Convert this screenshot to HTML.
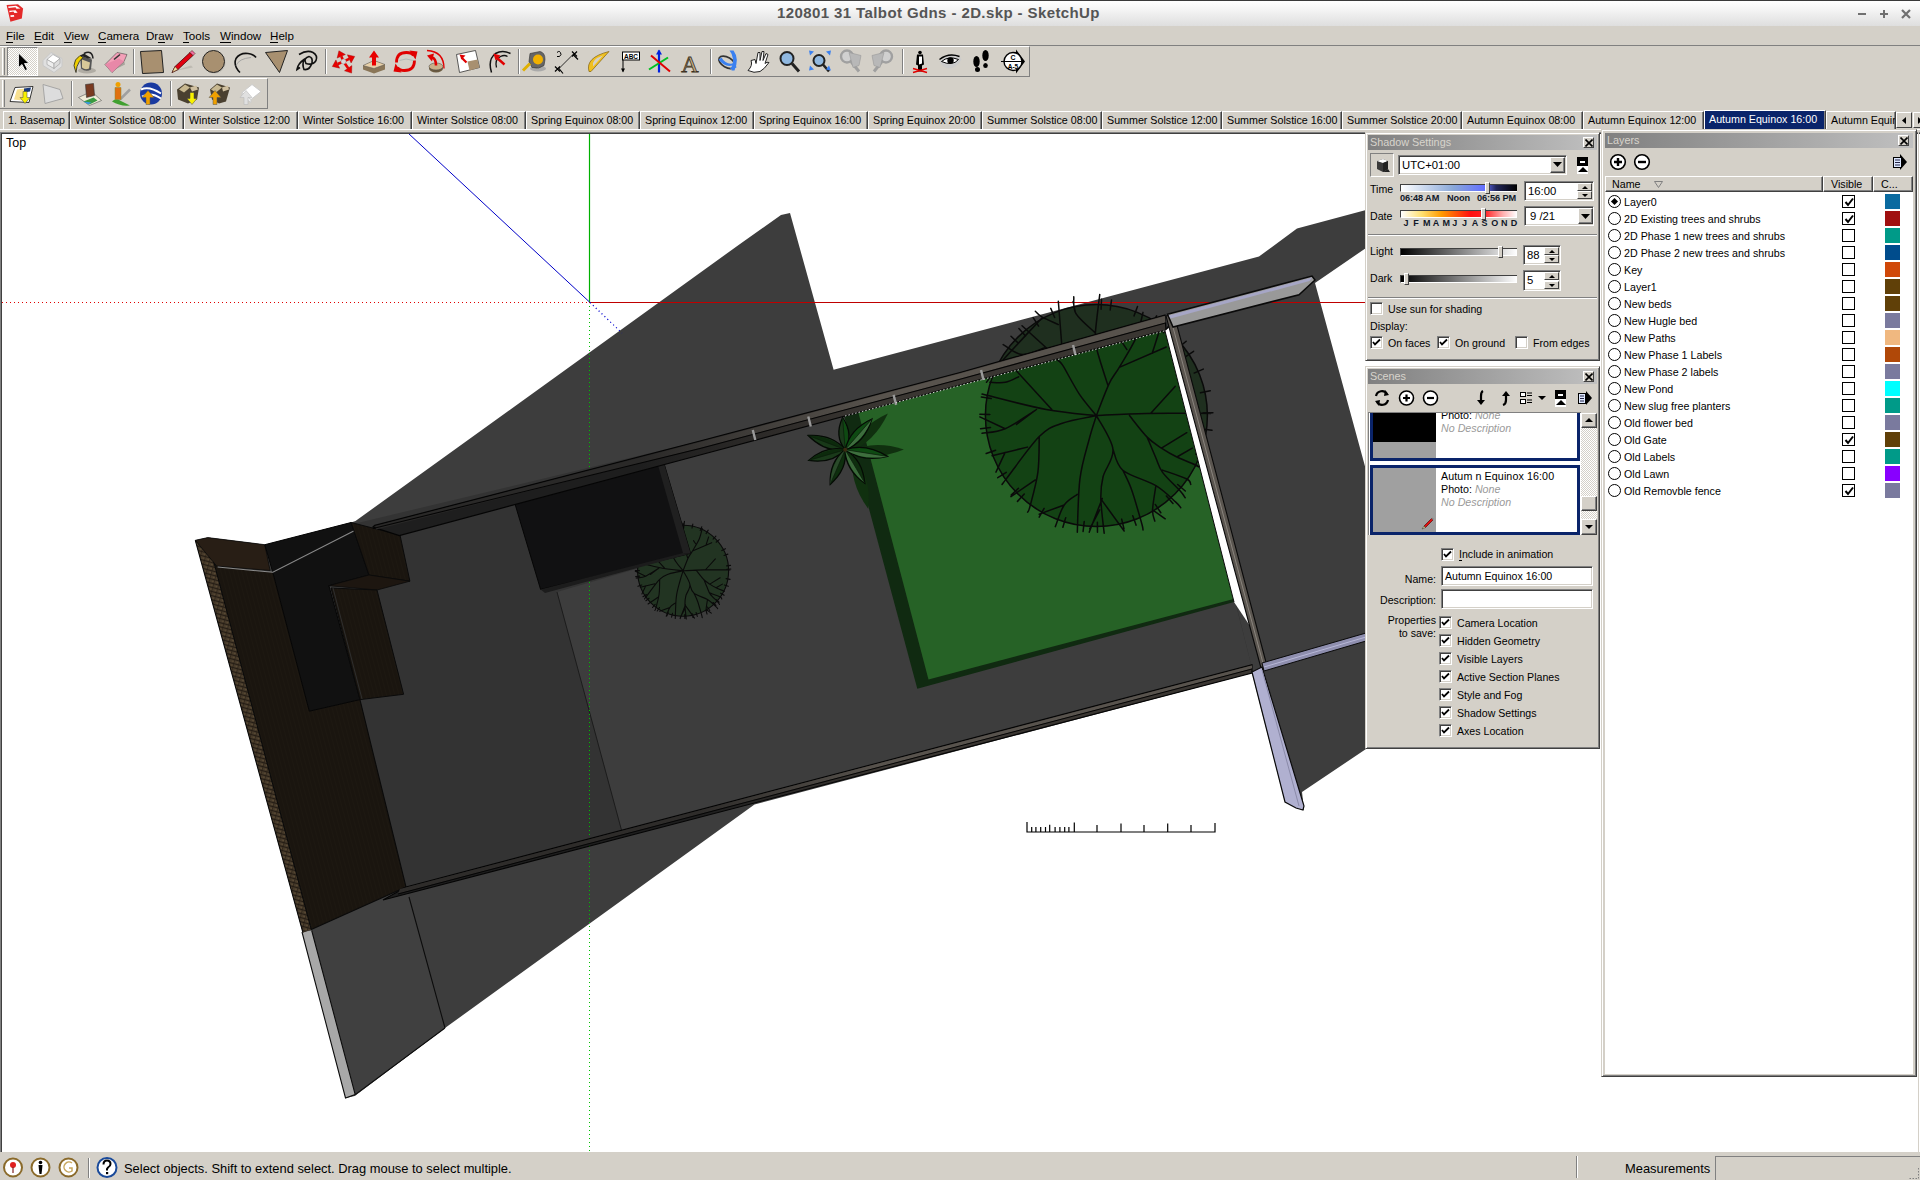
<!DOCTYPE html>
<html><head><meta charset="utf-8">
<style>
*{box-sizing:border-box}
html,body{margin:0;padding:0;width:1920px;height:1180px;overflow:hidden;background:#d4d0c8;font-family:"Liberation Sans",sans-serif;color:#000}
.a{position:absolute}
#title{left:0;top:0;width:1920px;height:26px;background:linear-gradient(#ffffff,#f6f6f6 30%,#dedede);border-top:1px solid #3a3a3a}
#title .t{position:absolute;left:777px;top:3px;font-weight:bold;font-size:15px;letter-spacing:0.4px;color:#555;white-space:nowrap}
#menu{left:0;top:26px;width:1920px;height:20px;background:#d4d0c8;border-bottom:1px solid #808080}
#menu span{position:absolute;top:3px;font-size:11.6px}
#menu u{text-decoration:none;border-bottom:1px solid #000}
.tb{background:#d4d0c8;border-top:1px solid #fff;border-bottom:1px solid #808080}
.sep{position:absolute;top:3px;height:25px;width:2px;border-left:1px solid #808080;border-right:1px solid #fff}
.ic{position:absolute;top:0}
#tabs{left:0;top:109px;width:1920px;height:22px}
.tab{position:absolute;top:2px;height:18px;border-left:1px solid #fff;border-top:1px solid #fff;border-right:1px solid #404040;box-shadow:inset -1px 0 #808080;font-size:10.7px;line-height:16px;padding-left:4px;white-space:nowrap;overflow:hidden;background:#d4d0c8}
.tab.act{background:#0a246a;color:#fff;top:1px;height:19px}
.scr{position:absolute;top:3px;width:16px;height:16px;border-left:1px solid #fff;border-top:1px solid #fff;border-right:1px solid #404040;border-bottom:1px solid #404040}
#vp{left:0;top:132px;width:1920px;height:1020px;background:#fff;border-left:1px solid #808080;border-top:1px solid #808080;box-shadow:inset 1px 1px #404040}
.pnl{position:absolute;background:#d4d0c8;border-left:1px solid #d4d0c8;border-top:1px solid #d4d0c8;border-right:1px solid #404040;border-bottom:1px solid #404040;box-shadow:inset 1px 1px #fff,inset -1px -1px #808080}
.ttl{position:absolute;height:15px;background:linear-gradient(90deg,#808080,#c0c0c0);color:#d8d4cc;font-size:10.8px;line-height:15px;padding-left:2px;white-space:nowrap}
.cls{position:absolute;width:11px;height:11px;background:#d4d0c8;border-left:1px solid #fff;border-top:1px solid #fff;border-right:1px solid #404040;border-bottom:1px solid #404040}
.lbl{position:absolute;font-size:10.6px;white-space:nowrap;line-height:13px}
.sunk{position:absolute;background:#fff;border-left:1px solid #808080;border-top:1px solid #808080;border-right:1px solid #fff;border-bottom:1px solid #fff;box-shadow:inset 1px 1px #404040,inset -1px -1px #d4d0c8}
.rais{position:absolute;background:#d4d0c8;border-left:1px solid #fff;border-top:1px solid #fff;border-right:1px solid #404040;border-bottom:1px solid #404040;box-shadow:inset -1px -1px #808080}
.cb{position:absolute;width:13px;height:13px;background:#fff;border-left:1px solid #808080;border-top:1px solid #808080;border-right:1px solid #fff;border-bottom:1px solid #fff;box-shadow:inset 1px 1px #404040,inset -1px -1px #d4d0c8}

.hl{position:absolute;height:2px;border-top:1px solid #808080;border-bottom:1px solid #fff}
.row{position:absolute;left:0;height:17px;width:307px;font-size:10.7px;line-height:17px}
.rad{position:absolute;left:3px;top:2px;width:13px;height:13px;border:1px solid #000;border-radius:50%;background:#fff}
.rad.on::after{content:"";position:absolute;left:3px;top:3px;width:5px;height:5px;background:#000;transform:rotate(45deg)}
.nm{position:absolute;left:19px;top:0}
.vcb{position:absolute;left:237px;top:2px;width:13px;height:13px;border:1px solid #000;background:#fff}
.sw{position:absolute;left:280px;top:1px;width:15px;height:15px}

</style></head><body>
<div id="title" class="a"><div class="t">120801 31 Talbot Gdns - 2D.skp - SketchUp</div><svg class="a" style="left:0;top:-1px" width="30" height="26"><path d="M6.6,5.1 L18,4.2 L23.1,8.6 L21.8,18.5 L10.4,21.8Z" fill="#e42a2a"/><path d="M8.2,6.4 L16,5.8 L20.5,8.6 L16.5,8.8 L15.5,7.3 L8.5,7.9Z" fill="#fff"/><path d="M9.3,10.7 L15.6,10.2 L17.6,12.7 L14.5,12.9 L13.3,11.6 L9.5,12.2Z" fill="#fff"/><path d="M10.4,15.3 L14,15.1 L14.2,16.7 L10.7,17Z" fill="#fff"/></svg><div class="a" style="left:1858px;top:12px;width:8px;height:2px;background:#707070"></div><div class="a" style="left:1880px;top:12px;width:8px;height:2px;background:#707070"></div><div class="a" style="left:1883px;top:9px;width:2px;height:8px;background:#707070"></div><svg class="a" style="left:1901px;top:8px" width="10" height="10"><path d="M1,1 L9,9 M9,1 L1,9" stroke="#707070" stroke-width="2.2"/></svg></div>
<div id="menu" class="a"><span style="left:6px"><u>F</u>ile</span><span style="left:34px"><u>E</u>dit</span><span style="left:64px"><u>V</u>iew</span><span style="left:98px"><u>C</u>amera</span><span style="left:146px">Dr<u>a</u>w</span><span style="left:183px"><u>T</u>ools</span><span style="left:220px"><u>W</u>indow</span><span style="left:270px"><u>H</u>elp</span></div>
<div class="a tb" style="left:0;top:46px;width:1030px;height:31px;border-right:1px solid #808080"></div>
<div class="a tb" style="left:0;top:78px;width:268px;height:31px;border-right:1px solid #808080"></div>
<div class="a" style="left:2px;top:48px;width:3px;height:27px;border-left:1px solid #fff;border-right:1px solid #808080"></div>
<div class="a" style="left:2px;top:80px;width:3px;height:27px;border-left:1px solid #fff;border-right:1px solid #808080"></div>
<div class="a" style="left:7px;top:47px;width:31px;height:29px;border-left:1px solid #808080;border-top:1px solid #808080;border-right:1px solid #fff;border-bottom:1px solid #fff;background:repeating-conic-gradient(#fff 0 25%,#d4d0c8 0 50%) 0 0/2px 2px"></div>
<div class="a" style="left:133px;top:49px;width:2px;height:25px;border-left:1px solid #808080;border-right:1px solid #fff"></div>
<div class="a" style="left:325px;top:49px;width:2px;height:25px;border-left:1px solid #808080;border-right:1px solid #fff"></div>
<div class="a" style="left:518px;top:49px;width:2px;height:25px;border-left:1px solid #808080;border-right:1px solid #fff"></div>
<div class="a" style="left:710px;top:49px;width:2px;height:25px;border-left:1px solid #808080;border-right:1px solid #fff"></div>
<div class="a" style="left:902px;top:49px;width:2px;height:25px;border-left:1px solid #808080;border-right:1px solid #fff"></div>
<div class="a" style="left:71px;top:81px;width:2px;height:25px;border-left:1px solid #808080;border-right:1px solid #fff"></div>
<div class="a" style="left:170px;top:81px;width:2px;height:25px;border-left:1px solid #808080;border-right:1px solid #fff"></div>
<svg class="a" style="left:0;top:0" width="1040" height="110"><g transform="translate(22,61.5)"><path d="M-3.5,-8.5 L-3.5,6 L0,3 L3,9 L5.5,8 L2.5,2 L7,2Z" fill="#000" stroke="#fff" stroke-width="0.8"/></g>
<g transform="translate(53,61.5)"><path d="M-10,-1 L-2,-9 L9,-3 L9,5 L1,11 L-10,4Z" fill="#e0e0e0" stroke="#c8c8c8" stroke-width="1"/><path d="M-6,-2 L0,-7 L7,-3 L1,2Z" fill="#fff" stroke="#999" stroke-width="0.6"/><path d="M-6,-2 L1,2 L1,7 L-6,3Z" fill="#eee" stroke="#999" stroke-width="0.6"/><path d="M1,2 L7,-3 L7,2 L1,7Z" fill="#ddd" stroke="#999" stroke-width="0.6"/></g>
<g transform="translate(84,61.5)"><ellipse cx="3" cy="9" rx="9" ry="3" fill="#b0aca4"/><path d="M-4,-6 L8,-2 L7,8 Q2,11 -3,7Z" fill="#555"/><path d="M-2,-2 L6,1 L5,7 Q1,9 -2,6Z" fill="#d8c898"/><path d="M0,-8 Q8,-12 9,-3" stroke="#222" stroke-width="1.5" fill="none"/><path d="M-4,-6 Q-10,-2 -10,4 Q-9,8 -8,11 L-7,5 Q-5,-1 -1,-4Z" fill="#f0d000" stroke="#222" stroke-width="0.8"/><path d="M-4,-6 L0,-8 L8,-3 L4,-3Z" fill="#222"/></g>
<g transform="translate(115,61.5)"><path d="M-2,9 L10,3 L8,-5 Z" fill="#a8a49c"/><path d="M-10,3 L2,-9 L12,-7 L9,0 L-3,11Z" fill="#f4a0b8" stroke="#444" stroke-width="0.6"/><path d="M-10,3 L-3,11 L9,0 L4,-3Z" fill="#e888a8"/><path d="M-1,-2 L5,-7" stroke="#333" stroke-width="1.6"/></g>
<g transform="translate(151.5,61.5)"><path d="M-11,-10 L10,-11 L12,11 L-9,12Z" fill="#a89070" stroke="#222" stroke-width="1"/></g>
<g transform="translate(183,61.5)"><path d="M-11,10 L8,4 L10,6 Z" fill="#b8b4ac" opacity="0.8"/><path d="M-11,11 L-8,5 L7,-9 L10,-6 L-5,8Z" fill="#e00010" stroke="#300" stroke-width="0.7"/><path d="M-11,11 L-8,5 L-5,8Z" fill="#f0e0a0" stroke="#300" stroke-width="0.5"/><path d="M7,-9 L9,-11 L12,-8 L10,-6Z" fill="#f070a0" stroke="#300" stroke-width="0.5"/></g>
<g transform="translate(213.5,61.5)"><circle cx="1" cy="1" r="11" fill="#b8b4ac" opacity="0.6"/><circle cx="0" cy="0" r="11" fill="#a89070" stroke="#222" stroke-width="1"/></g>
<g transform="translate(245,61.5)"><path d="M-5,11 Q-12,4 -9,-3 Q-5,-9 3,-8 Q9,-7 11,-4" stroke="#111" stroke-width="1.6" fill="none"/><path d="M-9,4 Q-6,-3 6,-4" stroke="#999" stroke-width="0.8" fill="none"/></g>
<g transform="translate(276.5,61.5)"><path d="M-11,-9 L11,-11 L3,11Z" fill="#a89070" stroke="#222" stroke-width="1"/></g>
<g transform="translate(307,61.5)"><path d="M-8,-7 Q0,-12 6,-9 Q11,-6 9,-1 Q6,4 -1,2 Q-4,-3 2,-5 Q6,-4 5,1 Q3,9 -3,8 Q-5,3 -3,-2 Q-9,2 -10,8 L-7,6" stroke="#111" stroke-width="1.6" fill="none"/></g>
<g transform="translate(343.5,61.5)"><path d="M0,0 L-2.23,-5.19" stroke="#e80000" stroke-width="2.6"/><path d="M-4.60,-10.70 L1.90,-6.97 L-6.36,-3.41Z" fill="#e80000" stroke="#900" stroke-width="0.4"/><path d="M0,0 L5.74,-2.61" stroke="#e80000" stroke-width="2.6"/><path d="M11.20,-5.10 L7.60,1.48 L3.87,-6.71Z" fill="#e80000" stroke="#900" stroke-width="0.4"/><path d="M0,0 L-5.72,2.55" stroke="#e80000" stroke-width="2.6"/><path d="M-11.20,5.00 L-7.56,-1.56 L-3.89,6.66Z" fill="#e80000" stroke="#900" stroke-width="0.4"/><path d="M0,0 L4.66,6.68" stroke="#e80000" stroke-width="2.6"/><path d="M8.10,11.60 L0.98,9.26 L8.35,4.10Z" fill="#e80000" stroke="#900" stroke-width="0.4"/><circle cx="0" cy="0" r="2.5" fill="#d8d8d8" stroke="#999" stroke-width="0.5"/></g>
<g transform="translate(374,61.5)"><path d="M-11,4 L0,-1 L11,3 L11,8 L0,12 L-11,8Z" fill="#8a7658"/><path d="M-11,4 L0,-1 L11,3 L0,7Z" fill="#e8d0a8" stroke="#555" stroke-width="0.5"/><path d="M-2,4 L-2,-4 L-5,-4 L0,-11 L5,-4 L2,-4 L2,4Z" fill="#e80000"/></g>
<g transform="translate(405.5,61.5)"><path d="M-9,1 Q-9,-9 1,-9 Q6,-9 8,-6" stroke="#e00000" stroke-width="2.8" fill="none"/><path d="M4,-11 L12,-10 L10,-2Z" fill="#e00000"/><path d="M9,-1 Q9,9 -1,9 Q-6,9 -8,6" stroke="#e00000" stroke-width="2.8" fill="none"/><path d="M-4,11 L-12,10 L-10,2Z" fill="#e00000"/><path d="M-6,-1 Q0,-4 8,-1" stroke="#9aa" stroke-width="1" fill="none" opacity="0.6"/></g>
<g transform="translate(436,61.5)"><ellipse cx="0" cy="7" rx="7" ry="4" fill="#6a5a40"/><ellipse cx="0" cy="5" rx="7" ry="3.5" fill="#c8b088" stroke="#444" stroke-width="0.5"/><path d="M-9,-11 Q8,-10 8,7" stroke="#e00000" stroke-width="1.4" fill="none"/><path d="M0,4 Q0,-3 -4,-4" stroke="#e00000" stroke-width="2.6" fill="none"/><path d="M-9,-6 L-2,-8 L-4,0Z" fill="#e00000"/></g>
<g transform="translate(467.5,61.5)"><path d="M-11,-7 L8,-11 L12,6 L-8,11Z" fill="#fff" stroke="#333" stroke-width="0.8"/><path d="M0,0 L10,-2 L12,6 L2,9Z" fill="#a89070"/><path d="M-1,1 L-6,-4" stroke="#e00000" stroke-width="2.2"/><path d="M-8,-7 L-2,-6 L-6,-2Z" fill="#e00000"/></g>
<g transform="translate(498.5,61.5)"><path d="M-7,11 Q-11,-2 -3,-8 Q4,-12 12,-8" stroke="#111" stroke-width="1.5" fill="none"/><path d="M-2,6 Q-4,-2 2,-5 Q6,-7 9,-5" stroke="#111" stroke-width="1.3" fill="none"/><path d="M6,3 L-2,-4" stroke="#e00000" stroke-width="2.4"/><path d="M-5,-8 L2,-6 L-3,-1Z" fill="#e00000"/></g>
<g transform="translate(535,61.5)"><ellipse cx="3" cy="7" rx="8" ry="3" fill="#aaa"/><path d="M-5,-8 L5,-10 Q10,-9 10,-2 L9,4 Q4,8 -3,6 L-6,0Z" fill="#666" stroke="#333" stroke-width="0.6"/><circle cx="3" cy="-2" r="5" fill="#f0b000"/><path d="M-5,2 L-12,9" stroke="#e0b000" stroke-width="3"/></g>
<g transform="translate(566,61.5)"><path d="M-8,8 L8,-8" stroke="#000" stroke-width="0.8"/><path d="M-11,5 L-6,10 M-11,10 L-6,5 M6,-10 L11,-5 M6,-5 L11,-10" stroke="#000" stroke-width="1.2"/><path d="M-7,7 L-3,12 M7,-7 L12,-2" stroke="#000" stroke-width="1.2"/><path d="M-9,-9 Q-6,-12 -5,-7 Q-6,-4 -9,-5" stroke="#000" stroke-width="1" fill="none"/></g>
<g transform="translate(597,61.5)"><path d="M-8,10 Q-12,-4 12,-10 L-6,10Z" fill="#f0c020" stroke="#806010" stroke-width="0.7"/><path d="M-4,5 Q-6,-2 6,-6 Z" fill="#d4d0c8"/></g>
<g transform="translate(628,61.5)"><rect x="-5.5" y="-9.5" width="17" height="8" fill="#fff" stroke="#000"/><text x="3" y="-3" font-size="6.5" font-weight="bold" text-anchor="middle" font-family="Liberation Sans">ABC</text><path d="M-5,-2 L-5,10" stroke="#000"/><path d="M-7,7 L-5,11 L-3,7Z" fill="#000"/></g>
<g transform="translate(659,61.5)"><path d="M0,-11 L0,11" stroke="#0020e0" stroke-width="2.2"/><path d="M-3,-7 L0,-12 L3,-7Z" fill="#0020e0"/><path d="M-10,8 L9,-4" stroke="#00c020" stroke-width="2"/><path d="M-8,-6 L11,10" stroke="#e00000" stroke-width="2"/></g>
<g transform="translate(690,61.5)"><text x="0" y="10" font-size="24" font-family="Liberation Serif" text-anchor="middle" fill="#c8b088" stroke="#3a3020" stroke-width="0.8">A</text></g>
<g transform="translate(727.5,61.5)"><ellipse cx="0" cy="1" rx="9" ry="5" stroke="#333" stroke-width="1.6" fill="none" transform="rotate(30)"/><path d="M-9,-2 Q-3,6 5,4 L2,8 L9,6 L7,-1 L5,2 Q-2,3 -6,-4Z" fill="#3a80f0"/><path d="M2,-11 Q8,-4 4,9 L7,9 Q12,-3 6,-11Z" fill="#3a80f0"/></g>
<g transform="translate(758,61.5)"><path d="M-10,9 Q-5,4 -7,-1 L-3,-2 L-2,2 L0,-9 L2,-9 L2,-1 L4,-10 L6,-10 L5,-1 L8,-8 L10,-7 L7,2 Q9,0 11,1 Q6,8 2,10 Q-4,12 -10,9Z" fill="#fff" stroke="#222" stroke-width="1"/></g>
<g transform="translate(789,61.5)"><circle cx="-2" cy="-3" r="6.5" fill="#90b8e0" stroke="#222" stroke-width="2"/><path d="M3,2 L10,10" stroke="#222" stroke-width="3"/></g>
<g transform="translate(820,61.5)"><circle cx="-1" cy="-1" r="5.5" fill="#90b8e0" stroke="#222" stroke-width="2"/><path d="M3,3 L9,10" stroke="#222" stroke-width="2.6"/><path d="M-11,-11 L-6,-10 L-10,-6Z M11,-11 L6,-10 L10,-6Z M-11,9 L-6,8 L-10,4Z M9,4 L11,9 L6,8Z" fill="#3a80f0"/></g>
<g transform="translate(851,61.5)"><circle cx="-4" cy="-5" r="6" stroke="#a0a0a0" stroke-width="2.4" fill="#d0d0d0"/><path d="M0,0 L8,10" stroke="#a0a0a0" stroke-width="3"/><path d="M-2,-9 L10,-6 L8,4 L2,6Z" fill="#b8b8b8" stroke="#999" stroke-width="0.6"/></g>
<g transform="translate(882,61.5)"><circle cx="4" cy="-5" r="6" stroke="#a0a0a0" stroke-width="2.4" fill="#d0d0d0"/><path d="M0,0 L-8,10" stroke="#a0a0a0" stroke-width="3"/><path d="M2,-9 L-10,-6 L-8,4 L-2,6Z" fill="#b8b8b8" stroke="#999" stroke-width="0.6"/></g>
<g transform="translate(920,61.5)"><circle cx="0" cy="-9" r="1.8" fill="#000"/><path d="M-3,-7 L3,-7 L4,3 L2,4 L2,10 L-2,10 L-2,4 L-4,3Z" fill="#000"/><path d="M-1,-5 L2,-5 L2,2 L-1,3Z" fill="#fff"/><path d="M-7,7 L7,11 M-7,11 L7,7" stroke="#e00000" stroke-width="1.4"/></g>
<g transform="translate(950.5,61.5)"><path d="M-11,0 Q-3,-8 6,-7 Q10,-5 11,-2 Q6,7 -2,7 Q-8,6 -11,0Z" fill="#ccc"/><path d="M-9,0 Q-2,-6 8,-2 Q2,5 -9,0Z" fill="#fff" stroke="#000" stroke-width="1"/><circle cx="0" cy="-1" r="3.2" fill="#000"/><path d="M-11,-2 Q-2,-9 9,-5" stroke="#000" stroke-width="1.4" fill="none"/></g>
<g transform="translate(981.5,61.5)"><ellipse cx="-5" cy="0" rx="3.2" ry="5.5" fill="#000"/><ellipse cx="-4" cy="8" rx="2.5" ry="2.5" fill="#000"/><ellipse cx="4" cy="-6" rx="3.2" ry="5.5" fill="#000"/><ellipse cx="4" cy="4" rx="2.3" ry="2.5" fill="#000"/></g>
<g transform="translate(1013,61.5)"><path d="M3,-12 L12,0 L3,12Z" fill="#000"/><circle cx="0" cy="0" r="9" fill="#fff" stroke="#000" stroke-width="1.4"/><path d="M-12,0 L9,0" stroke="#000" stroke-width="1"/><text x="0" y="-2" font-size="7" font-weight="bold" text-anchor="middle" font-family="Liberation Sans">C</text><text x="0" y="7" font-size="6.5" font-weight="bold" text-anchor="middle" font-family="Liberation Sans">A-5</text></g>
<g transform="translate(22,93.5)"><path d="M-12,8 L-7,-6 L11,-7 L7,9Z" fill="#fff" stroke="#222" stroke-width="0.9"/><path d="M-8,6 L-5,-4 L3,-5 L0,7Z" fill="#f8e090"/><path d="M2,-5 L9,-6 L8,-2 L2,-1Z" fill="#1a3a7a"/><path d="M1,-2 L5,-2 L5,4 L8,4 L3,10 L-2,4 L1,4Z" fill="#f8f000" stroke="#444" stroke-width="0.5"/></g>
<g transform="translate(53,93.5)"><path d="M-10,-9 L7,-4 L10,5 L-8,10Z" fill="#ddd" stroke="#999" stroke-width="0.8"/></g>
<g transform="translate(89.5,93.5)"><path d="M-11,4 L2,-2 L12,7 L0,12Z" fill="#f0ecd8" stroke="#555" stroke-width="0.6"/><path d="M-6,8 L0,11 L8,7 L4,4Z" fill="#3a9a40"/><path d="M-6,8 L-1,11 L2,9Z" fill="#3a9ae0"/><path d="M-4,-9 L4,-10 L5,2 L-3,4Z" fill="#7a3a20" stroke="#333" stroke-width="0.6"/></g>
<g transform="translate(120,93.5)"><path d="M-8,8 Q-4,4 0,7 L10,12 Q0,13 -8,8Z" fill="#40a030"/><path d="M0,6 L10,-4" stroke="#a0a0a0" stroke-width="2.5"/><circle cx="-2" cy="-9" r="2.5" fill="#f0a000"/><path d="M-5,-6 L1,-6 L1,6 L-5,6Z" fill="#e07010" stroke="#883" stroke-width="0.5"/></g>
<g transform="translate(151,93.5)"><circle cx="0" cy="0" r="11" fill="#1a3aa0"/><path d="M-10,-4 Q-2,-8 10,0 M-9,3 Q0,-2 10,5" stroke="#fff" stroke-width="2" fill="none"/><path d="M-5,11 L-5,4 L-9,4 L-3,-3 L3,4 L-1,4 L-1,11Z" fill="#f0a000" stroke="#555" stroke-width="0.5"/></g>
<g transform="translate(188,93.5)"><path d="M-11,-4 L-3,-10 L11,-6 L9,6 L0,10 L-10,6Z" fill="#4a4030"/><path d="M-9,-4 L-3,-9 L2,-6 L-4,-1Z" fill="#c8b890"/><path d="M2,-6 L8,-8 L10,-4 L4,-2Z" fill="#d0c0a0"/><path d="M2,-1 L6,-1 L6,5 L9,5 L4,11 L-1,5 L2,5Z" fill="#f8f000" stroke="#444" stroke-width="0.5"/></g>
<g transform="translate(219,93.5)"><path d="M-9,-4 L-2,-10 L11,-6 L7,8 L0,10 L-7,6Z" fill="#4a4030"/><path d="M-8,-4 L-2,-9 L3,-6 L-3,-1Z" fill="#c8b890"/><path d="M3,-6 L9,-8 L10,-4 L4,-2Z" fill="#d0c0a0"/><path d="M-6,11 L-6,4 L-10,4 L-4,-3 L2,4 L-2,4 L-2,11Z" fill="#f0a000" stroke="#555" stroke-width="0.5"/></g>
<g transform="translate(250,93.5)"><path d="M-8,-1 L2,-9 L11,-2 L1,6Z" fill="#fff" stroke="#ccc" stroke-width="1"/><path d="M-8,-1 L1,6 L1,9 L-8,3Z" fill="#eee" stroke="#ccc"/><path d="M-6,11 L-6,4 L-10,4 L-4,-3 L2,4 L-2,4 L-2,11Z" fill="#e0e0e0" stroke="#bbb" stroke-width="0.6"/></g></svg>
<div id="tabs" class="a"><div class="tab" style="left:3px;width:67px">1. Basemap</div><div class="tab" style="left:70px;width:114px">Winter Solstice 08:00</div><div class="tab" style="left:184px;width:114px">Winter Solstice 12:00</div><div class="tab" style="left:298px;width:114px">Winter Solstice 16:00</div><div class="tab" style="left:412px;width:114px">Winter Solstice 08:00</div><div class="tab" style="left:526px;width:114px">Spring Equinox 08:00</div><div class="tab" style="left:640px;width:114px">Spring Equinox 12:00</div><div class="tab" style="left:754px;width:114px">Spring Equinox 16:00</div><div class="tab" style="left:868px;width:114px">Spring Equinox 20:00</div><div class="tab" style="left:982px;width:120px">Summer Solstice 08:00</div><div class="tab" style="left:1102px;width:120px">Summer Solstice 12:00</div><div class="tab" style="left:1222px;width:120px">Summer Solstice 16:00</div><div class="tab" style="left:1342px;width:120px">Summer Solstice 20:00</div><div class="tab" style="left:1462px;width:121px">Autumn Equinox 08:00</div><div class="tab" style="left:1583px;width:121px">Autumn Equinox 12:00</div><div class="tab act" style="left:1704px;width:122px">Autumn Equinox 16:00</div><div class="tab" style="left:1826px;width:70px">Autumn Equinox 20:00</div><div class="scr" style="left:1896px"><svg width="14" height="14" style="position:absolute;left:0;top:0"><path d="M9,4 L5,7.5 L9,11Z" fill="#000"/></svg></div><div class="scr" style="left:1913px"><svg width="14" height="14" style="position:absolute;left:0;top:0"><path d="M4,4 L8,7.5 L4,11Z" fill="#000"/></svg></div></div>
<div class="a" style="left:0;top:129px;width:1920px;height:1px;background:#fff"></div><div id="vp" class="a"></div>
<svg class="a" style="left:0;top:0" width="1366" height="1152" viewBox="0 0 1366 1152">
<defs>
<clipPath id="vpc"><rect x="2" y="134" width="1364" height="1018"/></clipPath>

<clipPath id="notlawn"><polygon points="0,0 1366,0 1366,1152 0,1152 0,0 843,412 917.3,688.7 1235,602 1250,626 1165,330 843,412"/></clipPath>
<linearGradient id="floorG" gradientUnits="userSpaceOnUse" x1="300" y1="560" x2="620" y2="700">
<stop offset="0" stop-color="#333333"/><stop offset="1" stop-color="#333333"/>
</linearGradient>
<linearGradient id="wallG" gradientUnits="userSpaceOnUse" x1="200" y1="540" x2="400" y2="900">
<stop offset="0" stop-color="#261d15"/><stop offset="1" stop-color="#1f1812"/>
</linearGradient>
<pattern id="brick" width="5" height="4" patternUnits="userSpaceOnUse" patternTransform="rotate(15)">
<rect width="5" height="4" fill="#463a2a"/><rect x="0" y="0" width="5" height="1" fill="#241c14"/><rect x="2" y="1" width="1" height="3" fill="#32281c"/><rect x="0" y="2" width="2" height="1" fill="#5a4a34"/>
</pattern>
<linearGradient id="fenceG" gradientUnits="userSpaceOnUse" x1="640" y1="0" x2="880" y2="0">
<stop offset="0" stop-color="#2a2928"/><stop offset="1" stop-color="#58534d"/>
</linearGradient>
<linearGradient id="fenceD" gradientUnits="userSpaceOnUse" x1="640" y1="0" x2="880" y2="0">
<stop offset="0" stop-color="#1e1e1e"/><stop offset="1" stop-color="#3a3632"/>
</linearGradient>
<linearGradient id="fenceHL" gradientUnits="userSpaceOnUse" x1="600" y1="0" x2="880" y2="0">
<stop offset="0" stop-color="#3a3836"/><stop offset="1" stop-color="#8a857d"/>
</linearGradient>
<linearGradient id="lfG" gradientUnits="userSpaceOnUse" x1="700" y1="0" x2="880" y2="0"><stop offset="0" stop-color="#2e2c2a"/><stop offset="1" stop-color="#58534d"/></linearGradient><linearGradient id="lfD" gradientUnits="userSpaceOnUse" x1="700" y1="0" x2="880" y2="0"><stop offset="0" stop-color="#1e1e1e"/><stop offset="1" stop-color="#3a3632"/></linearGradient>
<linearGradient id="lfH" gradientUnits="userSpaceOnUse" x1="700" y1="0" x2="900" y2="0"><stop offset="0" stop-color="#3a3836"/><stop offset="1" stop-color="#7a756e"/></linearGradient>
<pattern id="wood" width="4" height="6" patternUnits="userSpaceOnUse" patternTransform="rotate(-15)">
<rect width="4" height="6" fill="#1a150f"/><rect x="1" y="0" width="1" height="6" fill="#1d1811"/>
</pattern>
</defs>
<g clip-path="url(#vpc)">
<polygon fill="#3d3d3d" points="195.3,540.3 207.8,537.6 264.8,544.7 351,522.5 355.5,521 740,244 781,215 790,213 833.6,369.7 1259,256.5 1297,228.5 1366,210 1366,248 1315,283 1366,470 1366,749 1302,792 1304,810 1285,802 1252,673 754.5,804.5 445,1028 354.6,1096 346,1098 302.9,932.7"/>
<polygon fill="url(#floorG)" points="353,524 700,441 960,372.5 1165,315 1252,668 383,900 406,887 360,700"/>
<polygon fill="#3d3d3d" points="557,592 691,553 663,462 700,452 960,384 1166,330 1252,668 622,832"/>
<line x1="557" y1="592" x2="622" y2="832" stroke="#1c1c1c" stroke-width="1"/>
<polygon fill="#404040" points="311.25,930.6 406,887 409,897 445,1028 354.6,1096"/>
<polygon fill="#a8a8a8" points="302,932 311.7,930.5 355.2,1094.6 345.5,1098"/>
<path d="M302,932 L345.5,1098 L355.2,1094.6 L445,1028 M311.7,930.5 L355.2,1094.6 M409,897 L445,1028" stroke="#0c0c0c" stroke-width="1.1" fill="none"/>
<line x1="589.5" y1="302" x2="589.5" y2="1152" stroke="#00c000" stroke-width="1" stroke-dasharray="1,3"/>
<line x1="589.5" y1="133" x2="589.5" y2="302" stroke="#00b000" stroke-width="1.2"/>
<line x1="2" y1="302.5" x2="589" y2="302.5" stroke="#e00000" stroke-width="1" stroke-dasharray="1,3"/>
<line x1="589" y1="302.5" x2="1366" y2="302.5" stroke="#c00000" stroke-width="1.2"/>
<line x1="589.5" y1="302" x2="408" y2="133" stroke="#0000c8" stroke-width="1"/>
<line x1="590" y1="302.5" x2="622" y2="333" stroke="#0000d0" stroke-width="1.2" stroke-dasharray="1.1,2.9"/>
<polygon fill="url(#wood)" points="207.8,539.4 216.7,566.1 272.8,572.3 309.3,711.2 360,699.6 406,887 311.25,929.6"/>
<polygon fill="url(#brick)" points="195.3,540.3 207.8,539.4 311.25,929.6 302.9,932.7"/>
<path d="M195.3,540.3 L302.9,932.7 M207.8,539.4 L311.25,929.6 L406,887 M360,700 L406,887" stroke="#0a0a0a" stroke-width="1.1" fill="none"/>
<polygon fill="#281e15" stroke="#0a0a0a" stroke-width="0.8" points="195.3,540.3 207.8,537.6 264.8,544.7 270.1,570.5 216.7,566.1"/>
<polygon fill="#111111" stroke="#050505" stroke-width="1" points="264.8,544.7 351.1,522.5 369,575 328.9,585.7 360,699.6 309.3,711.2 272.8,572.3"/>
<polyline fill="none" stroke="#8a8a8a" stroke-width="1.1" points="217.6,567 272.8,572.3 354.7,530.5"/>
<polygon fill="url(#wood)" stroke="#0a0a0a" stroke-width="1" points="351.1,522.5 400,535 409.9,581.2 369,575"/>
<polygon fill="#1d1610" stroke="#0a0a0a" stroke-width="0.8" points="328.9,585.7 369,575 409.9,581.2 377,590"/>
<polygon fill="url(#wood)" stroke="#0a0a0a" stroke-width="1" points="331,588 377,590 403.6,694.3 360,699.6"/>
<line x1="333" y1="588" x2="362" y2="699" stroke="#2e2e2e" stroke-width="1"/>
<circle cx="683.1" cy="570.8" r="45.5" fill="#223422" stroke="#0a0a0a" stroke-width="1.1"/><path d="M683.10,570.80 C686.51,570.65 695.76,570.04 703.58,569.89 C711.39,569.74 725.57,569.89 729.97,569.89 M683.10,570.80 C679.67,570.38 670.34,569.77 662.53,568.30 C654.72,566.83 640.62,563.03 636.24,561.97 M683.10,570.80 C680.72,571.34 672.72,572.60 668.81,574.03 C664.91,575.46 663.43,575.63 659.67,579.40 C655.91,583.17 648.79,593.38 646.25,596.64 C643.70,599.91 644.73,598.62 644.43,599.01 M683.10,570.80 C682.61,572.42 681.26,576.18 680.14,580.49 C679.02,584.80 677.18,590.30 676.37,596.64 C675.55,602.99 675.46,614.92 675.27,618.57 M683.10,570.80 C684.23,573.10 689.42,580.41 689.88,584.59 C690.33,588.76 686.66,592.48 685.83,595.87 C685.00,599.26 684.84,601.07 684.92,604.92 C685.00,608.78 686.06,616.68 686.28,619.03 M689.88,584.59 C690.55,586.02 690.99,590.70 693.93,593.19 C696.86,595.67 703.87,597.33 707.49,599.51 C711.11,601.69 713.93,604.78 715.63,606.29 C717.33,607.80 717.34,608.19 717.68,608.56 M693.93,593.19 C694.54,594.54 696.29,597.68 697.57,601.28 C698.85,604.89 700.85,612.11 701.62,614.84 C702.39,617.57 702.11,617.19 702.21,617.66 M707.49,599.51 C707.26,601.16 706.20,607.01 706.12,609.43 C706.05,611.85 706.88,613.26 707.03,614.02 M706.12,609.43 L711.31,613.12 M684.92,604.92 L694.48,618.12 M684.47,609.43 L680.37,617.21 M696.66,570.80 C697.86,572.27 701.71,577.41 703.89,579.63 C706.08,581.85 707.73,582.77 709.76,584.13 C711.80,585.49 713.63,586.58 716.09,587.77 C718.54,588.96 723.10,590.69 724.50,591.27 M709.76,584.13 L720.14,577.81 M716.09,587.77 L722.41,584.13 M703.89,579.63 C704.49,581.05 706.43,585.78 707.49,588.18 C708.54,590.58 708.56,591.79 710.22,594.05 C711.88,596.31 715.91,600.00 717.45,601.74 C719.00,603.48 719.16,604.01 719.50,604.47 M710.22,593.14 C711.87,593.75 718.21,595.80 720.14,596.78 C722.06,597.76 721.50,598.64 721.77,599.01 M705.49,569.75 L715.36,558.83 M683.10,570.80 C683.96,568.63 686.72,561.09 688.29,557.79 C689.85,554.49 690.65,554.13 692.47,551.01 C694.30,547.88 697.63,542.79 699.25,539.04 C700.88,535.29 701.72,530.24 702.21,528.48 M692.47,551.01 L711.72,542.68 M705.99,545.27 L708.63,536.95 M687.79,558.29 C687.04,555.89 684.18,547.36 683.33,543.91 C682.47,540.46 682.46,541.37 682.64,537.58 C682.83,533.80 684.16,523.93 684.47,521.20 M693.52,540.59 L695.61,543.73 M683.10,570.80 C681.93,569.33 678.39,565.40 676.09,561.97 C673.80,558.55 670.81,552.56 669.31,550.23 C667.81,547.91 667.46,548.38 667.08,548.00 M664.81,568.30 L650.34,552.51 M668.86,541.22 L667.49,523.93 M682.42,536.67 C681.14,535.39 676.16,531.41 674.73,528.99 C673.29,526.56 673.97,523.26 673.82,522.12 M667.49,533.49 C666.36,532.97 662.28,531.26 660.71,530.35 C659.14,529.44 658.51,528.42 658.08,528.03 M662.53,543.00 L652.62,533.94 M660.81,530.76 C658.08,533.72 648.22,544.11 644.43,548.50 C640.63,552.90 639.12,555.71 638.06,557.15 M661.72,543.04 C660.20,543.50 655.42,546.00 652.62,545.77 C649.81,545.55 646.17,542.36 644.88,541.68 M651.25,554.88 C650.34,555.25 647.76,556.77 645.79,557.15 C643.82,557.53 640.48,557.15 639.42,557.15 M658.53,568.30 L650.34,574.44 M659.67,579.40 C659.58,581.83 659.75,589.20 659.12,593.96 C658.49,598.72 656.60,605.24 655.89,607.97 C655.19,610.71 655.06,609.98 654.89,610.38 M658.08,568.66 C656.01,569.91 649.34,574.60 645.70,576.17 C642.06,577.74 637.81,577.76 636.24,578.08 M635.33,571.35 L645.70,576.17 M654.84,583.72 L640.33,587.23 M645.70,585.86 L641.92,593.96 M658.08,597.19 L648.07,604.01 M675.27,603.10 C674.38,603.83 671.41,605.23 669.90,607.43 C668.40,609.63 666.87,614.82 666.26,616.30 M669.90,607.43 L659.67,611.20 M685.51,604.74 L680.14,618.57 M726.75,569.20 L730.84,569.05 M726.07,578.65 L730.10,579.39 M724.41,584.99 L728.28,586.32 M720.61,593.19 L724.12,595.29 M716.06,599.46 L719.15,602.15 M713.15,602.50 L715.97,605.47 M707.46,607.06 L709.74,610.46 M696.09,612.50 L697.31,616.41 M692.13,613.54 L692.97,617.54 M684.72,614.45 L684.87,618.54 M672.56,613.19 L671.57,617.16 M668.33,611.91 L666.95,615.76 M659.51,607.56 L657.30,611.01 M655.13,604.35 L652.51,607.50 M649.10,598.22 L645.91,600.79 M646.38,594.46 L642.94,596.68 M641.78,584.96 L637.91,586.29 M639.75,576.17 L635.69,576.67 M639.42,570.66 L635.33,570.65 M640.36,561.77 L636.36,560.92 M642.42,554.88 L638.61,553.39 M644.01,551.30 L640.35,549.47 M650.67,541.54 L647.63,538.79 M655.45,536.98 L652.86,533.81 M660.22,533.59 L658.07,530.10 M665.51,530.82 L663.86,527.07 M677.72,527.45 L677.21,523.39 M682.93,527.12 L682.92,523.03 M692.00,528.04 L692.83,524.03 M700.19,530.60 L701.79,526.83 M706.06,533.64 L708.21,530.16 M713.09,539.05 L715.91,536.07 M716.15,542.24 L719.24,539.56 M721.81,550.57 L725.44,548.67 M724.03,555.54 L727.87,554.11 M726.50,565.84 L730.57,565.38" stroke="#0a0a0a" stroke-width="1.1" fill="none" stroke-linecap="round"/>
<polygon fill="#111112" stroke="#060606" stroke-width="1" points="512.5,495.6 656,456.6 663,460 690.6,553.4 540.6,589.4"/>
<polygon fill="#202020" points="656,458 663,460 690.6,553.4 683,553"/>
<polygon fill="#1c1c1c" points="540.6,589.4 683,553 690.6,553.4 545,593"/>
<polygon fill="#102a11" points="843,412 1165,326 1235,601.8 917.3,688.7"/>
<polygon fill="#266226" points="858,411 1165,333 1233.6,599 928.5,679.4"/>
<path d="M849.2,451.7 Q874.353,442.283 887.9,413.4 Q858.877,426.647 849.2,451.7Z" fill="#10300f"/><path d="M849.2,451.7 Q874.257,461.701 903.9,449.5 Q873.373,439.719 849.2,451.7Z" fill="#10300f"/><path d="M853.2,453.7 Q848.373,481.607 868.2,508.7 Q871.527,475.293 853.2,453.7Z" fill="#10300f"/><path d="M845.2,449.7 Q853.95,434.459 842.5,417.7 Q834.02,436.141 845.2,449.7Z" fill="#1a3a1a" stroke="#050a05" stroke-width="1.3"/><path d="M845.2,449.7 Q851.957,434.627 842.5,417.7 Z" fill="#0e4a12"/><path d="M845.2,449.7 L842.5,417.7" stroke="#0a1a0a" stroke-width="0.7"/><path d="M845.2,449.7 Q832.133,433.974 808.2,435.5 Q824.967,452.646 845.2,449.7Z" fill="#183818" stroke="#050a05" stroke-width="1.3"/><path d="M845.2,449.7 Q831.416,435.841 808.2,435.5 Z" fill="#0c2a0c"/><path d="M845.2,449.7 L808.2,435.5" stroke="#0a1a0a" stroke-width="0.7"/><path d="M845.2,449.7 Q825.962,444.919 808.7,460.4 Q831.588,464.111 845.2,449.7Z" fill="#1a3a1a" stroke="#050a05" stroke-width="1.3"/><path d="M845.2,449.7 Q826.525,446.838 808.7,460.4 Z" fill="#0c2a0c"/><path d="M845.2,449.7 L808.7,460.4" stroke="#0a1a0a" stroke-width="0.7"/><path d="M845.2,449.7 Q829.271,461.347 830.2,484.4 Q847.629,469.283 845.2,449.7Z" fill="#0e2e0e" stroke="#050a05" stroke-width="1.3"/><path d="M845.2,449.7 Q831.107,462.141 830.2,484.4 Z" fill="#2a4a2a"/><path d="M845.2,449.7 L830.2,484.4" stroke="#0a1a0a" stroke-width="0.7"/><path d="M845.2,449.7 Q845.395,469.791 864.8,483.1 Q862.645,459.669 845.2,449.7Z" fill="#0e2e0e" stroke="#050a05" stroke-width="1.3"/><path d="M845.2,449.7 Q847.12,468.779 864.8,483.1 Z" fill="#3a6a3a"/><path d="M845.2,449.7 L864.8,483.1" stroke="#0a1a0a" stroke-width="0.7"/><path d="M845.2,449.7 Q864.761,442.447 871.9,419 Q849.669,429.323 845.2,449.7Z" fill="#0e4a12" stroke="#050a05" stroke-width="1.3"/><path d="M845.2,449.7 Q863.251,441.135 871.9,419 Z" fill="#3e6e3e"/><path d="M845.2,449.7 L871.9,419" stroke="#0a1a0a" stroke-width="0.7"/><path d="M845.2,449.7 Q862.671,462.592 887.5,456.4 Q865.799,442.838 845.2,449.7Z" fill="#0e4a12" stroke="#050a05" stroke-width="1.3"/><path d="M845.2,449.7 Q862.983,460.616 887.5,456.4 Z" fill="#3e6e3e"/><path d="M845.2,449.7 L887.5,456.4" stroke="#0a1a0a" stroke-width="0.7"/><circle cx="845.2" cy="449.7" r="2" fill="#3a2a10"/>
<clipPath id="treeA"><polygon points="843,412 1165,330 1250,626 1235,602 917.3,688.7"/></clipPath>
<g clip-path="url(#notlawn)"><circle cx="1096.4" cy="415.6" r="111" fill="#1f2f1f" stroke="#0a0a0a" stroke-width="1.5"/><path d="M1096.40,415.60 C1104.73,415.23 1127.30,413.75 1146.35,413.38 C1165.41,413.01 1200.00,413.38 1210.73,413.38 M1096.40,415.60 C1088.04,414.58 1065.28,413.08 1046.23,409.50 C1027.17,405.91 992.76,396.64 982.07,394.07 M1096.40,415.60 C1090.59,416.91 1071.07,419.98 1061.55,423.48 C1052.02,426.98 1048.41,427.38 1039.24,436.58 C1030.06,445.77 1012.69,470.67 1006.49,478.65 C1000.29,486.62 1002.79,483.46 1002.05,484.42 M1096.40,415.60 C1095.20,419.54 1091.92,428.74 1089.19,439.24 C1086.45,449.75 1081.95,463.16 1079.97,478.65 C1077.99,494.13 1077.75,523.23 1077.31,532.15 M1096.40,415.60 C1099.16,421.21 1111.83,439.04 1112.94,449.23 C1114.05,459.43 1105.08,468.49 1103.06,476.76 C1101.04,485.03 1100.66,489.43 1100.84,498.85 C1101.03,508.27 1103.62,527.52 1104.17,533.26 M1112.94,449.23 C1114.59,452.73 1115.66,464.14 1122.82,470.21 C1129.98,476.28 1147.07,480.31 1155.90,485.64 C1164.72,490.97 1171.62,498.50 1175.77,502.18 C1179.91,505.86 1179.93,506.81 1180.76,507.73 M1122.82,470.21 C1124.30,473.51 1128.57,481.16 1131.70,489.97 C1134.82,498.78 1139.69,516.39 1141.58,523.05 C1143.46,529.71 1142.78,528.78 1143.02,529.93 M1155.90,485.64 C1155.34,489.67 1152.75,503.94 1152.57,509.84 C1152.38,515.74 1154.42,519.18 1154.79,521.05 M1152.57,509.84 L1165.22,518.83 M1100.84,498.85 L1124.15,531.04 M1099.73,509.84 L1089.74,528.82 M1129.48,415.60 C1132.42,419.19 1141.80,431.71 1147.13,437.13 C1152.46,442.55 1156.49,444.81 1161.45,448.12 C1166.40,451.43 1170.88,454.10 1176.88,457.00 C1182.87,459.91 1193.99,464.13 1197.41,465.55 M1161.45,448.12 L1186.75,432.69 M1176.88,457.00 L1192.30,448.12 M1147.13,437.13 C1148.59,440.61 1153.32,452.14 1155.90,458.00 C1158.47,463.87 1158.50,466.81 1162.56,472.32 C1166.61,477.83 1176.43,486.84 1180.21,491.08 C1183.98,495.32 1184.37,496.63 1185.20,497.74 M1162.56,470.10 C1166.59,471.58 1182.06,476.59 1186.75,478.98 C1191.45,481.37 1190.08,483.51 1190.75,484.42 M1151.01,413.05 L1175.10,386.41 M1096.40,415.60 C1098.51,410.31 1105.24,391.90 1109.05,383.85 C1112.87,375.81 1114.81,374.94 1119.27,367.32 C1123.72,359.69 1131.85,347.28 1135.81,338.12 C1139.76,328.96 1141.82,316.66 1143.02,312.37 M1119.27,367.32 L1166.22,347.00 M1152.23,353.33 L1158.67,333.02 M1107.83,385.08 C1106.02,379.23 1099.05,358.42 1096.96,350.00 C1094.86,341.58 1094.83,343.80 1095.29,334.57 C1095.75,325.34 1098.99,301.27 1099.73,294.61 M1121.82,341.90 L1126.93,349.56 M1096.40,415.60 C1093.55,412.01 1084.91,402.43 1079.31,394.07 C1073.70,385.70 1066.43,371.11 1062.77,365.43 C1059.10,359.75 1058.23,360.90 1057.33,359.99 M1051.78,409.50 L1016.48,370.98 M1061.66,343.45 L1058.33,301.27 M1094.74,332.35 C1091.61,329.22 1079.47,319.51 1075.98,313.59 C1072.48,307.67 1074.13,299.62 1073.76,296.83 M1058.33,324.58 C1055.57,323.30 1045.62,319.14 1041.79,316.92 C1037.96,314.70 1036.42,312.20 1035.35,311.26 M1046.23,347.78 L1022.03,325.69 M1042.01,317.92 C1035.35,325.13 1011.30,350.48 1002.05,361.21 C992.80,371.94 989.10,378.79 986.51,382.30 M1044.23,347.89 C1040.53,349.00 1028.88,355.11 1022.03,354.55 C1015.19,354.00 1006.31,346.23 1003.16,344.56 M1018.70,376.75 C1016.48,377.68 1010.19,381.38 1005.38,382.30 C1000.57,383.23 992.43,382.30 989.84,382.30 M1036.46,409.50 L1016.48,424.48 M1039.24,436.58 C1039.01,442.50 1039.44,460.48 1037.90,472.10 C1036.37,483.72 1031.74,499.61 1030.02,506.29 C1028.30,512.97 1027.99,511.19 1027.58,512.17 M1035.35,410.38 C1030.32,413.44 1014.04,424.87 1005.16,428.70 C996.28,432.53 985.92,432.58 982.07,433.36 M979.85,416.93 L1005.16,428.70 M1027.47,447.12 L992.06,455.67 M1005.16,452.34 L995.95,472.10 M1035.35,479.98 L1010.93,496.63 M1077.31,494.41 C1075.12,496.17 1067.87,499.59 1064.21,504.96 C1060.55,510.32 1056.81,522.99 1055.33,526.60 M1064.21,504.96 L1039.24,514.17 M1102.28,498.41 L1089.19,532.15 M1202.93,412.98 L1212.91,412.73 M1202.12,428.97 L1212.03,430.22 M1195.74,454.15 L1205.06,457.76 M1191.70,463.28 L1200.63,467.75 M1177.69,484.50 L1185.31,490.96 M1166.41,495.93 L1172.98,503.46 M1155.27,504.42 L1160.79,512.75 M1132.74,515.77 L1136.15,525.16 M1121.64,519.13 L1124.00,528.83 M1097.39,522.16 L1097.48,532.14 M1084.23,521.46 L1083.09,531.39 M1065.73,517.65 L1062.86,527.22 M1044.10,508.44 L1039.19,517.14 M1024.25,494.02 L1017.49,501.37 M1018.48,488.29 L1011.17,495.10 M1006.24,472.41 L997.79,477.73 M995.63,450.26 L986.19,453.51 M990.51,427.51 L980.58,428.63 M989.85,414.45 L979.86,414.35 M991.20,398.61 L981.34,397.02 M998.91,372.58 L989.77,368.55 M1000.93,368.27 L991.98,363.83 M1018.30,343.11 L1010.98,336.31 M1025.54,336.02 L1018.89,328.56 M1038.60,326.08 L1033.19,317.68 M1054.66,317.55 L1050.75,308.36 M1075.10,311.19 L1073.10,301.40 M1101.10,309.14 L1101.54,299.16 M1110.21,309.94 L1111.50,300.03 M1133.98,315.89 L1137.51,306.54 M1151.46,324.37 L1156.62,315.81 M1163.43,332.76 L1169.71,325.00 M1178.48,347.65 L1186.18,341.28 M1185.26,356.79 L1193.59,351.28 M1194.10,373.07 L1203.26,369.08 M1200.49,392.80 L1210.25,390.67" stroke="#0a0a0a" stroke-width="1.5" fill="none" stroke-linecap="round"/></g>
<g clip-path="url(#treeA)"><circle cx="1096.4" cy="415.6" r="111" fill="#134214" stroke="#0a0a0a" stroke-width="1.5"/><path d="M1096.40,415.60 C1104.73,415.23 1127.30,413.75 1146.35,413.38 C1165.41,413.01 1200.00,413.38 1210.73,413.38 M1096.40,415.60 C1088.04,414.58 1065.28,413.08 1046.23,409.50 C1027.17,405.91 992.76,396.64 982.07,394.07 M1096.40,415.60 C1090.59,416.91 1071.07,419.98 1061.55,423.48 C1052.02,426.98 1048.41,427.38 1039.24,436.58 C1030.06,445.77 1012.69,470.67 1006.49,478.65 C1000.29,486.62 1002.79,483.46 1002.05,484.42 M1096.40,415.60 C1095.20,419.54 1091.92,428.74 1089.19,439.24 C1086.45,449.75 1081.95,463.16 1079.97,478.65 C1077.99,494.13 1077.75,523.23 1077.31,532.15 M1096.40,415.60 C1099.16,421.21 1111.83,439.04 1112.94,449.23 C1114.05,459.43 1105.08,468.49 1103.06,476.76 C1101.04,485.03 1100.66,489.43 1100.84,498.85 C1101.03,508.27 1103.62,527.52 1104.17,533.26 M1112.94,449.23 C1114.59,452.73 1115.66,464.14 1122.82,470.21 C1129.98,476.28 1147.07,480.31 1155.90,485.64 C1164.72,490.97 1171.62,498.50 1175.77,502.18 C1179.91,505.86 1179.93,506.81 1180.76,507.73 M1122.82,470.21 C1124.30,473.51 1128.57,481.16 1131.70,489.97 C1134.82,498.78 1139.69,516.39 1141.58,523.05 C1143.46,529.71 1142.78,528.78 1143.02,529.93 M1155.90,485.64 C1155.34,489.67 1152.75,503.94 1152.57,509.84 C1152.38,515.74 1154.42,519.18 1154.79,521.05 M1152.57,509.84 L1165.22,518.83 M1100.84,498.85 L1124.15,531.04 M1099.73,509.84 L1089.74,528.82 M1129.48,415.60 C1132.42,419.19 1141.80,431.71 1147.13,437.13 C1152.46,442.55 1156.49,444.81 1161.45,448.12 C1166.40,451.43 1170.88,454.10 1176.88,457.00 C1182.87,459.91 1193.99,464.13 1197.41,465.55 M1161.45,448.12 L1186.75,432.69 M1176.88,457.00 L1192.30,448.12 M1147.13,437.13 C1148.59,440.61 1153.32,452.14 1155.90,458.00 C1158.47,463.87 1158.50,466.81 1162.56,472.32 C1166.61,477.83 1176.43,486.84 1180.21,491.08 C1183.98,495.32 1184.37,496.63 1185.20,497.74 M1162.56,470.10 C1166.59,471.58 1182.06,476.59 1186.75,478.98 C1191.45,481.37 1190.08,483.51 1190.75,484.42 M1151.01,413.05 L1175.10,386.41 M1096.40,415.60 C1098.51,410.31 1105.24,391.90 1109.05,383.85 C1112.87,375.81 1114.81,374.94 1119.27,367.32 C1123.72,359.69 1131.85,347.28 1135.81,338.12 C1139.76,328.96 1141.82,316.66 1143.02,312.37 M1119.27,367.32 L1166.22,347.00 M1152.23,353.33 L1158.67,333.02 M1107.83,385.08 C1106.02,379.23 1099.05,358.42 1096.96,350.00 C1094.86,341.58 1094.83,343.80 1095.29,334.57 C1095.75,325.34 1098.99,301.27 1099.73,294.61 M1121.82,341.90 L1126.93,349.56 M1096.40,415.60 C1093.55,412.01 1084.91,402.43 1079.31,394.07 C1073.70,385.70 1066.43,371.11 1062.77,365.43 C1059.10,359.75 1058.23,360.90 1057.33,359.99 M1051.78,409.50 L1016.48,370.98 M1061.66,343.45 L1058.33,301.27 M1094.74,332.35 C1091.61,329.22 1079.47,319.51 1075.98,313.59 C1072.48,307.67 1074.13,299.62 1073.76,296.83 M1058.33,324.58 C1055.57,323.30 1045.62,319.14 1041.79,316.92 C1037.96,314.70 1036.42,312.20 1035.35,311.26 M1046.23,347.78 L1022.03,325.69 M1042.01,317.92 C1035.35,325.13 1011.30,350.48 1002.05,361.21 C992.80,371.94 989.10,378.79 986.51,382.30 M1044.23,347.89 C1040.53,349.00 1028.88,355.11 1022.03,354.55 C1015.19,354.00 1006.31,346.23 1003.16,344.56 M1018.70,376.75 C1016.48,377.68 1010.19,381.38 1005.38,382.30 C1000.57,383.23 992.43,382.30 989.84,382.30 M1036.46,409.50 L1016.48,424.48 M1039.24,436.58 C1039.01,442.50 1039.44,460.48 1037.90,472.10 C1036.37,483.72 1031.74,499.61 1030.02,506.29 C1028.30,512.97 1027.99,511.19 1027.58,512.17 M1035.35,410.38 C1030.32,413.44 1014.04,424.87 1005.16,428.70 C996.28,432.53 985.92,432.58 982.07,433.36 M979.85,416.93 L1005.16,428.70 M1027.47,447.12 L992.06,455.67 M1005.16,452.34 L995.95,472.10 M1035.35,479.98 L1010.93,496.63 M1077.31,494.41 C1075.12,496.17 1067.87,499.59 1064.21,504.96 C1060.55,510.32 1056.81,522.99 1055.33,526.60 M1064.21,504.96 L1039.24,514.17 M1102.28,498.41 L1089.19,532.15 M1202.93,412.98 L1212.91,412.73 M1202.12,428.97 L1212.03,430.22 M1195.74,454.15 L1205.06,457.76 M1191.70,463.28 L1200.63,467.75 M1177.69,484.50 L1185.31,490.96 M1166.41,495.93 L1172.98,503.46 M1155.27,504.42 L1160.79,512.75 M1132.74,515.77 L1136.15,525.16 M1121.64,519.13 L1124.00,528.83 M1097.39,522.16 L1097.48,532.14 M1084.23,521.46 L1083.09,531.39 M1065.73,517.65 L1062.86,527.22 M1044.10,508.44 L1039.19,517.14 M1024.25,494.02 L1017.49,501.37 M1018.48,488.29 L1011.17,495.10 M1006.24,472.41 L997.79,477.73 M995.63,450.26 L986.19,453.51 M990.51,427.51 L980.58,428.63 M989.85,414.45 L979.86,414.35 M991.20,398.61 L981.34,397.02 M998.91,372.58 L989.77,368.55 M1000.93,368.27 L991.98,363.83 M1018.30,343.11 L1010.98,336.31 M1025.54,336.02 L1018.89,328.56 M1038.60,326.08 L1033.19,317.68 M1054.66,317.55 L1050.75,308.36 M1075.10,311.19 L1073.10,301.40 M1101.10,309.14 L1101.54,299.16 M1110.21,309.94 L1111.50,300.03 M1133.98,315.89 L1137.51,306.54 M1151.46,324.37 L1156.62,315.81 M1163.43,332.76 L1169.71,325.00 M1178.48,347.65 L1186.18,341.28 M1185.26,356.79 L1193.59,351.28 M1194.10,373.07 L1203.26,369.08 M1200.49,392.80 L1210.25,390.67" stroke="#0a0a0a" stroke-width="1.5" fill="none" stroke-linecap="round"/></g>
<polygon fill="url(#fenceD)" stroke="#050505" stroke-width="1.2" points="374.7,525.4 700,441 960,372.5 1165,315 1166,330 960,385 700,455 399.3,535.6 373,527"/>
<polygon fill="url(#fenceG)" points="375.5,526 700,442 960,373.5 1165,316 1165.5,322.5 960,378.75 700,448 376,529.5"/>
<polyline fill="none" stroke="#050505" stroke-width="1.1" points="373,528.5 700,448.5 960,379.25 1165.5,323"/>
<path d="M752.8,430 l2.5,10" stroke="#9a9a9a" stroke-width="2.4"/>
<path d="M808.3,416.5 l2.5,10" stroke="#9a9a9a" stroke-width="2.4"/>
<path d="M893.6,394.9 l2.5,10" stroke="#9a9a9a" stroke-width="2.4"/>
<path d="M981,370 l2.5,10" stroke="#9a9a9a" stroke-width="2.4"/>
<path d="M1073,345 l2.5,10" stroke="#9a9a9a" stroke-width="2.4"/>
<polyline fill="none" stroke="#e8e8e8" stroke-width="0.9" stroke-dasharray="1.5,2" points="845,416 960,385.5 1166,330.5"/>
<polygon fill="#ffffff" points="1165,331 1170,327 1250,626 1234,602"/>
<line x1="1165" y1="331" x2="1234" y2="602" stroke="#0a0a0a" stroke-width="1"/>
<polygon fill="#5a554f" stroke="#0a0a0a" stroke-width="1.1" points="1166,316 1174,314 1267,666 1261,668"/>
<line x1="1170" y1="316" x2="1264" y2="667" stroke="#8a857e" stroke-width="1"/>
<polygon fill="url(#lfD)" stroke="#050505" stroke-width="1.1" points="383,900 406,887 1252,664.6 1252,673 383,900"/>
<polygon fill="url(#lfG)" points="400,889 1252,665.5 1252,668.5 398,893.5"/>
<line x1="398" y1="894" x2="1252" y2="669" stroke="#050505" stroke-width="1"/>
<polygon fill="#8e8eae" stroke="#0a0a0a" stroke-width="1" points="1262,663 1366,633 1366,641 1264,671"/>
<line x1="1264" y1="667" x2="1366" y2="637" stroke="#b8b8d8" stroke-width="1"/>
<polygon fill="#b0b0d0" stroke="#0a0a0a" stroke-width="1.2" points="1252,672 1262,667 1304,806 1303,810 1296,808 1285,802"/>
<line x1="1262" y1="670" x2="1299" y2="806" stroke="#8a8aa8" stroke-width="1"/>
<polygon fill="#999999" stroke="#0a0a0a" stroke-width="1.5" points="1167.5,314.3 1312,276 1315,280 1299,294.7 1173,327"/>
<polygon fill="#a6a6c6" points="1169,315.5 1312,277.5 1309.5,281 1170.5,318.5"/>
</g>
<path d="M1027,822 L1027,832 L1215,832 L1215,823 M1074.3,822.5 L1074.3,832 M1121,823.5 L1121,832 M1167.7,823.5 L1167.7,832 M1097,825 L1097,832 M1144,825 L1144,832 M1191,825 L1191,832 M1031.7,827 L1031.7,832 M1035.9,827 L1035.9,832 M1040.7,827 L1040.7,832 M1045.5,827 L1045.5,832 M1049.7,824.8 L1049.7,832 M1055.1,827 L1055.1,832 M1059.9,827 L1059.9,832 M1064.7,827 L1064.7,832 M1068.9,827 L1068.9,832" stroke="#000" stroke-width="1.2" fill="none"/>
</svg>
<div class="a" style="left:6px;top:136px;font-size:12.5px">Top</div>
<div class="pnl" style="left:1365px;top:132px;width:235px;height:229px">
</div>
<div class="ttl" style="left:1368px;top:135px;width:229px">Shadow Settings</div>
<div class="cls" style="left:1583px;top:137px"><svg class="a" style="left:1px;top:1px" width="8" height="8"><path d="M0.5,0.5 L7.5,7.5 M7.5,0.5 L0.5,7.5" stroke="#000" stroke-width="1.6"/></svg></div>
<div class="rais" style="left:1370px;top:153px;width:24px;height:24px;box-shadow:none;border-left-color:#808080;border-top-color:#808080;border-right-color:#fff;border-bottom-color:#fff"><svg class="a" style="left:3px;top:3px" width="17" height="17"><path d="M3,4 L9,2 L14,4 L14,12 L9,15 L3,12Z" fill="#3a3a3a"/><path d="M3,4 L9,2 L14,4 L9,6Z" fill="#fff"/><path d="M9,6 L14,4 L14,12 L9,15Z" fill="#222"/><path d="M9,15 L16,15 L14,12Z" fill="#222"/></svg></div>
<div class="sunk" style="left:1398px;top:155px;width:169px;height:20px"><span class="lbl" style="left:3px;top:3px;font-size:11.3px">UTC+01:00</span><div class="rais" style="left:151px;top:1px;width:15px;height:16px"><svg class="a" style="left:2px;top:4px" width="9" height="6"><path d="M0,0 L9,0 L4.5,5Z" fill="#000"/></svg></div></div>
<div class="a" style="left:1576px;top:156px;width:13px;height:19px;background:#fff;border:1px solid #d4d0c8"><div class="a" style="left:0;top:0;width:11px;height:9px;background:#000"></div><div class="a" style="left:3px;top:4px;width:5px;height:1.5px;background:#fff"></div><svg class="a" style="left:1px;top:10px" width="10" height="6"><path d="M0,5 L5,0 L10,5Z" fill="#000"/></svg></div>
<span class="lbl" style="left:1370px;top:183px">Time</span>
<div class="a" style="left:1400px;top:184px;width:117px;height:8px;border-top:1px solid #404040;border-left:1px solid #404040;border-bottom:1px solid #fff;background:linear-gradient(90deg,#fff,#8aa8d8 45%,#6470ff 72%,#22265a 82%,#000)"></div>
<div class="rais" style="left:1485px;top:182px;width:5px;height:12px;box-shadow:none"></div>
<span class="a" style="left:1400px;top:193px;font-size:9.2px;font-weight:bold;color:#101828;white-space:nowrap;letter-spacing:-0.1px">06:48 AM</span><span class="a" style="left:1447px;top:193px;font-size:9.2px;font-weight:bold;color:#101828;white-space:nowrap;letter-spacing:-0.1px">Noon</span><span class="a" style="left:1477px;top:193px;font-size:9.2px;font-weight:bold;color:#101828;white-space:nowrap;letter-spacing:-0.1px">06:56 PM</span>
<div class="sunk" style="left:1524px;top:181px;width:70px;height:20px"><span class="lbl" style="left:3px;top:3px;font-size:11.3px">16:00</span><div class="rais" style="left:52px;top:1px;width:15px;height:8px;box-shadow:none"><svg class="a" style="left:4px;top:2px" width="6" height="3"><path d="M0,3 L3,0 L6,3Z" fill="#000"/></svg></div><div class="rais" style="left:52px;top:9px;width:15px;height:8px;box-shadow:none"><svg class="a" style="left:4px;top:2px" width="6" height="3"><path d="M0,0 L3,3 L6,0Z" fill="#000"/></svg></div></div>
<span class="lbl" style="left:1370px;top:210px">Date</span>
<div class="a" style="left:1400px;top:210px;width:117px;height:8px;border-top:1px solid #404040;border-left:1px solid #404040;border-bottom:1px solid #fff;background:linear-gradient(90deg,#fff 0%,#ffe070 18%,#ff9a00 35%,#ff1010 60%,#ff2020 72%,#ffb0b0 88%,#fff 100%)"></div>
<div class="rais" style="left:1481px;top:208px;width:5px;height:12px;box-shadow:none"></div>
<span class="a" style="left:1403.5px;top:218px;font-size:9px;font-weight:bold;color:#101828">J</span><span class="a" style="left:1413.2px;top:218px;font-size:9px;font-weight:bold;color:#101828">F</span><span class="a" style="left:1423.0px;top:218px;font-size:9px;font-weight:bold;color:#101828">M</span><span class="a" style="left:1432.8px;top:218px;font-size:9px;font-weight:bold;color:#101828">A</span><span class="a" style="left:1442.5px;top:218px;font-size:9px;font-weight:bold;color:#101828">M</span><span class="a" style="left:1452.2px;top:218px;font-size:9px;font-weight:bold;color:#101828">J</span><span class="a" style="left:1462.0px;top:218px;font-size:9px;font-weight:bold;color:#101828">J</span><span class="a" style="left:1471.8px;top:218px;font-size:9px;font-weight:bold;color:#101828">A</span><span class="a" style="left:1481.5px;top:218px;font-size:9px;font-weight:bold;color:#101828">S</span><span class="a" style="left:1491.2px;top:218px;font-size:9px;font-weight:bold;color:#101828">O</span><span class="a" style="left:1501.0px;top:218px;font-size:9px;font-weight:bold;color:#101828">N</span><span class="a" style="left:1510.8px;top:218px;font-size:9px;font-weight:bold;color:#101828">D</span>
<div class="sunk" style="left:1524px;top:206px;width:70px;height:20px"><span class="lbl" style="left:5px;top:3px;font-size:11.3px">9 /21</span><div class="rais" style="left:53px;top:1px;width:15px;height:16px"><svg class="a" style="left:2px;top:5px" width="9" height="6"><path d="M0,0 L9,0 L4.5,5Z" fill="#000"/></svg></div></div>
<div class="hl" style="left:1368px;top:234px;width:229px"></div>
<span class="lbl" style="left:1370px;top:245px">Light</span>
<div class="a" style="left:1400px;top:248px;width:117px;height:8px;border-top:1px solid #404040;border-left:1px solid #404040;border-bottom:1px solid #fff;background:linear-gradient(90deg,#000,#fff)"></div>
<div class="rais" style="left:1498px;top:246px;width:5px;height:12px;box-shadow:none"></div>
<div class="sunk" style="left:1523px;top:245px;width:38px;height:20px"><span class="lbl" style="left:3px;top:3px;font-size:11.3px">88</span><div class="rais" style="left:20px;top:1px;width:15px;height:8px;box-shadow:none"><svg class="a" style="left:4px;top:2px" width="6" height="3"><path d="M0,3 L3,0 L6,3Z" fill="#000"/></svg></div><div class="rais" style="left:20px;top:9px;width:15px;height:8px;box-shadow:none"><svg class="a" style="left:4px;top:2px" width="6" height="3"><path d="M0,0 L3,3 L6,0Z" fill="#000"/></svg></div></div>
<span class="lbl" style="left:1370px;top:272px">Dark</span>
<div class="a" style="left:1400px;top:275px;width:117px;height:8px;border-top:1px solid #404040;border-left:1px solid #404040;border-bottom:1px solid #fff;background:linear-gradient(90deg,#000,#fff)"></div>
<div class="rais" style="left:1404px;top:273px;width:5px;height:12px;box-shadow:none"></div>
<div class="sunk" style="left:1523px;top:270px;width:38px;height:21px"><span class="lbl" style="left:3px;top:3px;font-size:11.3px">5</span><div class="rais" style="left:20px;top:1px;width:15px;height:8px;box-shadow:none"><svg class="a" style="left:4px;top:2px" width="6" height="3"><path d="M0,3 L3,0 L6,3Z" fill="#000"/></svg></div><div class="rais" style="left:20px;top:10px;width:15px;height:8px;box-shadow:none"><svg class="a" style="left:4px;top:2px" width="6" height="3"><path d="M0,0 L3,3 L6,0Z" fill="#000"/></svg></div></div>
<div class="hl" style="left:1368px;top:297px;width:229px"></div>
<div class="cb" style="left:1370px;top:302px"></div>
<span class="lbl" style="left:1388px;top:303px">Use sun for shading</span>
<span class="lbl" style="left:1370px;top:320px">Display:</span>
<div class="cb" style="left:1370px;top:336px"><svg class="a" style="left:1px;top:1px" width="9" height="9"><path d="M1,4 L3,6.5 L8,1.5" stroke="#000" stroke-width="1.8" fill="none"/></svg></div>
<span class="lbl" style="left:1388px;top:337px">On faces</span>
<div class="cb" style="left:1437px;top:336px"><svg class="a" style="left:1px;top:1px" width="9" height="9"><path d="M1,4 L3,6.5 L8,1.5" stroke="#000" stroke-width="1.8" fill="none"/></svg></div>
<span class="lbl" style="left:1455px;top:337px">On ground</span>
<div class="cb" style="left:1515px;top:336px"></div>
<span class="lbl" style="left:1533px;top:337px">From edges</span>
<div class="pnl" style="left:1365px;top:366px;width:235px;height:383px"></div>
<div class="ttl" style="left:1368px;top:369px;width:229px">Scenes</div>
<div class="cls" style="left:1583px;top:371px"><svg class="a" style="left:1px;top:1px" width="8" height="8"><path d="M0.5,0.5 L7.5,7.5 M7.5,0.5 L0.5,7.5" stroke="#000" stroke-width="1.6"/></svg></div>
<svg class="a" style="left:1372px;top:388px" width="225" height="20"><path d="M4,8 A6,6 0 0 1 15,6" stroke="#000" stroke-width="2.2" fill="none"/><path d="M13,2 L17,7 L12,8Z" fill="#000"/><path d="M16,12 A6,6 0 0 1 5,14" stroke="#000" stroke-width="2.2" fill="none"/><path d="M7,18 L3,13 L8,12Z" fill="#000"/><circle cx="34.5" cy="10" r="7" stroke="#000" stroke-width="1.6" fill="#fff"/><path d="M31,10 L38,10 M34.5,6.5 L34.5,13.5" stroke="#000" stroke-width="2.2"/><circle cx="58.5" cy="10" r="7" stroke="#000" stroke-width="1.6" fill="#fff"/><path d="M55,10 L62,10" stroke="#000" stroke-width="2.2"/><path d="M111,3 Q109,4 109,8 L109,14" stroke="#000" stroke-width="2.2" fill="none"/><path d="M105,12 L113,12 L109,17Z" fill="#000"/><path d="M131,17 Q134,16 134,12 L134,6" stroke="#000" stroke-width="2.2" fill="none"/><path d="M130,8 L138,8 L134,3Z" fill="#000"/><rect x="148.5" y="4.5" width="5" height="4" fill="#fff" stroke="#000"/><rect x="148.5" y="11.5" width="5" height="4" fill="#fff" stroke="#000"/><path d="M155,5 L160,5 M155,7.5 L160,7.5 M155,12 L160,12 M155,14.5 L160,14.5" stroke="#000"/><path d="M166,8 L174,8 L170,12Z" fill="#000"/></svg>
<div class="a" style="left:1554px;top:389px;width:13px;height:19px;background:#fff;border:1px solid #d4d0c8"><div class="a" style="left:0;top:0;width:11px;height:9px;background:#000"></div><div class="a" style="left:3px;top:4px;width:5px;height:1.5px;background:#fff"></div><svg class="a" style="left:1px;top:10px" width="10" height="6"><path d="M0,5 L5,0 L10,5Z" fill="#000"/></svg></div>
<svg class="a" style="left:1577px;top:389px" width="16" height="18"><rect x="1.5" y="4.5" width="8" height="10" fill="#cde" stroke="#000"/><path d="M3,7 L8,7 M3,9.5 L8,9.5 M3,12 L8,12" stroke="#336"/><path d="M9,2 L15,9 L9,16Z" fill="#000"/><rect x="1.5" y="4.5" width="7" height="10" fill="#dde8ff" stroke="#000"/><path d="M3,7 L7,7 M3,9.5 L7,9.5 M3,12 L7,12" stroke="#224"/></svg>
<div class="a" style="left:1368px;top:412px;width:213px;height:123px;background:#fff;border-left:1px solid #808080;border-top:1px solid #808080"></div>
<div class="a" style="left:1370px;top:413px;width:210px;height:48px;border:3px solid #0a246a;border-top:none;background:#fff"></div>
<div class="a" style="left:1373px;top:413px;width:63px;height:29px;background:#000"></div>
<div class="a" style="left:1373px;top:442px;width:63px;height:16px;background:#a0a0a0"></div>
<div class="a" style="left:1441px;top:413px;width:130px;height:10px;overflow:hidden"><span class="lbl" style="left:0;top:-4px;font-size:10.7px">Photo: <i style="color:#9a9a9a">None</i></span></div>
<span class="lbl" style="left:1441px;top:422px;font-size:10.7px;color:#9a9a9a"><i>No Description</i></span>
<div class="a" style="left:1370px;top:465px;width:210px;height:70px;border:3px solid #0a246a;background:#fff"></div>
<div class="a" style="left:1373px;top:468px;width:63px;height:64px;background:#a0a0a0"></div>
<svg class="a" style="left:1421px;top:516px" width="14" height="14"><path d="M3,10 L10.5,2.5 L12,4 L4.5,11.5Z" fill="#e01010" stroke="#400" stroke-width="0.6"/><path d="M1,13 L3,10 L4.5,11.5Z" fill="#e8d890" stroke="#333" stroke-width="0.5"/><path d="M10.5,2.5 L11.5,1.5 L13,3 L12,4Z" fill="#888"/></svg>
<span class="lbl" style="left:1441px;top:470px;font-size:10.7px;letter-spacing:0.1px">Autum n Equinox 16:00</span>
<span class="lbl" style="left:1441px;top:483px;font-size:10.7px">Photo: <i style="color:#9a9a9a">None</i></span>
<span class="lbl" style="left:1441px;top:496px;font-size:10.7px;color:#9a9a9a"><i>No Description</i></span>
<div class="a" style="left:1581px;top:413px;width:16px;height:122px;background:repeating-conic-gradient(#fff 0 25%,#d4d0c8 0 50%) 0 0/2px 2px"></div>
<div class="rais" style="left:1581px;top:413px;width:16px;height:15px"><svg class="a" style="left:3px;top:4px" width="8" height="5"><path d="M0,4 L4,0 L8,4Z" fill="#000"/></svg></div>
<div class="rais" style="left:1581px;top:496px;width:16px;height:15px"></div>
<div class="rais" style="left:1581px;top:519px;width:16px;height:16px"><svg class="a" style="left:3px;top:5px" width="8" height="5"><path d="M0,0 L4,4 L8,0Z" fill="#000"/></svg></div>
<div class="cb" style="left:1441px;top:548px"><svg class="a" style="left:1px;top:1px" width="9" height="9"><path d="M1,4 L3,6.5 L8,1.5" stroke="#000" stroke-width="1.8" fill="none"/></svg></div>
<span class="lbl" style="left:1459px;top:548px"><u style="text-decoration:none;border-bottom:1px solid #000;line-height:11px">I</u>nclude in animation</span>
<span class="lbl" style="left:1365px;top:573px;width:71px;text-align:right">Name:</span>
<div class="sunk" style="left:1441px;top:566px;width:152px;height:20px"><span class="lbl" style="left:3px;top:3px">Autumn Equinox 16:00</span></div>
<span class="lbl" style="left:1365px;top:594px;width:71px;text-align:right">Description:</span>
<div class="sunk" style="left:1441px;top:589px;width:152px;height:20px"></div>
<span class="lbl" style="left:1365px;top:614px;width:71px;text-align:right">Properties</span>
<span class="lbl" style="left:1365px;top:627px;width:71px;text-align:right">to save:</span>
<div class="cb" style="left:1439px;top:616px"><svg class="a" style="left:1px;top:1px" width="9" height="9"><path d="M1,4 L3,6.5 L8,1.5" stroke="#000" stroke-width="1.8" fill="none"/></svg></div>
<span class="lbl" style="left:1457px;top:617px">Camera Location</span>
<div class="cb" style="left:1439px;top:634px"><svg class="a" style="left:1px;top:1px" width="9" height="9"><path d="M1,4 L3,6.5 L8,1.5" stroke="#000" stroke-width="1.8" fill="none"/></svg></div>
<span class="lbl" style="left:1457px;top:635px">Hidden Geometry</span>
<div class="cb" style="left:1439px;top:652px"><svg class="a" style="left:1px;top:1px" width="9" height="9"><path d="M1,4 L3,6.5 L8,1.5" stroke="#000" stroke-width="1.8" fill="none"/></svg></div>
<span class="lbl" style="left:1457px;top:653px">Visible Layers</span>
<div class="cb" style="left:1439px;top:670px"><svg class="a" style="left:1px;top:1px" width="9" height="9"><path d="M1,4 L3,6.5 L8,1.5" stroke="#000" stroke-width="1.8" fill="none"/></svg></div>
<span class="lbl" style="left:1457px;top:671px">Active Section Planes</span>
<div class="cb" style="left:1439px;top:688px"><svg class="a" style="left:1px;top:1px" width="9" height="9"><path d="M1,4 L3,6.5 L8,1.5" stroke="#000" stroke-width="1.8" fill="none"/></svg></div>
<span class="lbl" style="left:1457px;top:689px">Style and Fog</span>
<div class="cb" style="left:1439px;top:706px"><svg class="a" style="left:1px;top:1px" width="9" height="9"><path d="M1,4 L3,6.5 L8,1.5" stroke="#000" stroke-width="1.8" fill="none"/></svg></div>
<span class="lbl" style="left:1457px;top:707px">Shadow Settings</span>
<div class="cb" style="left:1439px;top:724px"><svg class="a" style="left:1px;top:1px" width="9" height="9"><path d="M1,4 L3,6.5 L8,1.5" stroke="#000" stroke-width="1.8" fill="none"/></svg></div>
<span class="lbl" style="left:1457px;top:725px">Axes Location</span>
<div class="pnl" style="left:1601px;top:129px;width:316px;height:948px"></div>
<div class="ttl" style="left:1605px;top:133px;width:308px">Layers</div>
<div class="cls" style="left:1898px;top:135px"><svg class="a" style="left:1px;top:1px" width="8" height="8"><path d="M0.5,0.5 L7.5,7.5 M7.5,0.5 L0.5,7.5" stroke="#000" stroke-width="1.6"/></svg></div>
<svg class="a" style="left:1608px;top:152px" width="50" height="20"><circle cx="10" cy="10" r="7.3" stroke="#000" stroke-width="1.6" fill="#fff"/><path d="M6,10 L14,10 M10,6 L10,14" stroke="#000" stroke-width="2.4"/><circle cx="34" cy="10" r="7.3" stroke="#000" stroke-width="1.6" fill="#fff"/><path d="M30,10 L38,10" stroke="#000" stroke-width="2.4"/></svg>
<svg class="a" style="left:1892px;top:153px" width="16" height="18"><path d="M8,1 L15,9 L8,17Z" fill="#000"/><rect x="1.5" y="4.5" width="8" height="10" fill="#dde8ff" stroke="#000"/><path d="M3,7 L8,7 M3,9.5 L8,9.5 M3,12 L8,12" stroke="#224"/></svg>
<div class="a" style="left:1605px;top:176px;width:308px;height:898px;background:#fff"></div>
<div class="rais" style="left:1605px;top:176px;width:218px;height:16px"><span class="lbl" style="left:6px;top:1px;font-size:10.7px">Name</span><svg class="a" style="left:48px;top:4px" width="9" height="7"><path d="M0.5,0.5 L8.5,0.5 L4.5,6.5Z" fill="none" stroke="#808080"/></svg></div>
<div class="rais" style="left:1823px;top:176px;width:50px;height:16px"><span class="lbl" style="left:7px;top:1px;font-size:10.7px">Visible</span></div>
<div class="rais" style="left:1873px;top:176px;width:40px;height:16px"><span class="lbl" style="left:7px;top:1px;font-size:10.7px">C...</span></div>
<div class="a" style="left:1605px;top:193px;width:308px;height:320px">
<div class="row" style="top:0px"><div class="rad on"></div><span class="nm" style="top:1px">Layer0</span><div class="vcb"><svg class="a" style="left:1px;top:1px" width="10" height="10"><path d="M1.5,5 L4,8 L9,1.5" stroke="#000" stroke-width="2" fill="none"/></svg></div><div class="sw" style="background:#0a6aa0"></div></div>
<div class="row" style="top:17px"><div class="rad"></div><span class="nm" style="top:1px">2D Existing trees and shrubs</span><div class="vcb"><svg class="a" style="left:1px;top:1px" width="10" height="10"><path d="M1.5,5 L4,8 L9,1.5" stroke="#000" stroke-width="2" fill="none"/></svg></div><div class="sw" style="background:#a01010"></div></div>
<div class="row" style="top:34px"><div class="rad"></div><span class="nm" style="top:1px">2D Phase 1 new trees and shrubs</span><div class="vcb"></div><div class="sw" style="background:#009a88"></div></div>
<div class="row" style="top:51px"><div class="rad"></div><span class="nm" style="top:1px">2D Phase 2 new trees and shrubs</span><div class="vcb"></div><div class="sw" style="background:#004c8c"></div></div>
<div class="row" style="top:68px"><div class="rad"></div><span class="nm" style="top:1px">Key</span><div class="vcb"></div><div class="sw" style="background:#d04808"></div></div>
<div class="row" style="top:85px"><div class="rad"></div><span class="nm" style="top:1px">Layer1</span><div class="vcb"></div><div class="sw" style="background:#604008"></div></div>
<div class="row" style="top:102px"><div class="rad"></div><span class="nm" style="top:1px">New beds</span><div class="vcb"></div><div class="sw" style="background:#604008"></div></div>
<div class="row" style="top:119px"><div class="rad"></div><span class="nm" style="top:1px">New Hugle bed</span><div class="vcb"></div><div class="sw" style="background:#7a7a9e"></div></div>
<div class="row" style="top:136px"><div class="rad"></div><span class="nm" style="top:1px">New Paths</span><div class="vcb"></div><div class="sw" style="background:#f0b880"></div></div>
<div class="row" style="top:153px"><div class="rad"></div><span class="nm" style="top:1px">New Phase 1 Labels</span><div class="vcb"></div><div class="sw" style="background:#b04808"></div></div>
<div class="row" style="top:170px"><div class="rad"></div><span class="nm" style="top:1px">New Phase 2 labels</span><div class="vcb"></div><div class="sw" style="background:#7a7a9e"></div></div>
<div class="row" style="top:187px"><div class="rad"></div><span class="nm" style="top:1px">New Pond</span><div class="vcb"></div><div class="sw" style="background:#00ffff"></div></div>
<div class="row" style="top:204px"><div class="rad"></div><span class="nm" style="top:1px">New slug free planters</span><div class="vcb"></div><div class="sw" style="background:#009a88"></div></div>
<div class="row" style="top:221px"><div class="rad"></div><span class="nm" style="top:1px">Old flower bed</span><div class="vcb"></div><div class="sw" style="background:#7a7a9e"></div></div>
<div class="row" style="top:238px"><div class="rad"></div><span class="nm" style="top:1px">Old Gate</span><div class="vcb"><svg class="a" style="left:1px;top:1px" width="10" height="10"><path d="M1.5,5 L4,8 L9,1.5" stroke="#000" stroke-width="2" fill="none"/></svg></div><div class="sw" style="background:#604008"></div></div>
<div class="row" style="top:255px"><div class="rad"></div><span class="nm" style="top:1px">Old Labels</span><div class="vcb"></div><div class="sw" style="background:#009a88"></div></div>
<div class="row" style="top:272px"><div class="rad"></div><span class="nm" style="top:1px">Old Lawn</span><div class="vcb"></div><div class="sw" style="background:#8800ff"></div></div>
<div class="row" style="top:289px"><div class="rad"></div><span class="nm" style="top:1px">Old Removble fence</span><div class="vcb"><svg class="a" style="left:1px;top:1px" width="10" height="10"><path d="M1.5,5 L4,8 L9,1.5" stroke="#000" stroke-width="2" fill="none"/></svg></div><div class="sw" style="background:#7a7a9e"></div></div>
</div>
<div class="a" style="left:1918px;top:132px;width:1px;height:1021px;background:#d4d0c8"></div><div id="status" class="a" style="left:0;top:1152px;width:1920px;height:28px;background:#d4d0c8;border-top:1px solid #d4d0c8"></div>
<svg class="a" style="left:0;top:1155px" width="125" height="24">
<circle cx="13" cy="12.5" r="9" fill="#fff" stroke="#8a6a2a" stroke-width="2"/><circle cx="13" cy="10" r="3" fill="#e02020"/><path d="M13,12 L13,18" stroke="#802020" stroke-width="1.2"/>
<circle cx="40.5" cy="12.5" r="9" fill="#fff" stroke="#8a6a2a" stroke-width="2"/><circle cx="40.5" cy="7.5" r="1.8" fill="#000"/><path d="M38.5,10 L42.5,10 L42,15 L41.5,19 L39.5,19 L39,15Z" fill="#000"/>
<circle cx="68.5" cy="12.5" r="9" fill="#fff" stroke="#8a6a2a" stroke-width="2"/><path d="M72,8 A5,5 0 1 0 72,16 L72,13 L69,13" stroke="#c8a860" stroke-width="1.5" fill="none"/>
<path d="M88.5,3 L88.5,23" stroke="#808080"/><path d="M89.5,3 L89.5,23" stroke="#fff"/>
<circle cx="107" cy="12.5" r="9.5" fill="#fff" stroke="#1a4a9a" stroke-width="2"/><path d="M103.5,9.5 Q103.5,5.5 107,5.5 Q110.5,5.5 110.5,9 Q110.5,11 108,12.5 L107,14 L107,15.5" stroke="#000" stroke-width="2" fill="none"/><rect x="106" y="17" width="2.2" height="2.2" fill="#000"/>
</svg>
<span class="a" style="left:124px;top:1161px;font-size:12.9px;white-space:nowrap">Select objects. Shift to extend select. Drag mouse to select multiple.</span>
<div class="a" style="left:1576px;top:1156px;width:2px;height:22px;border-left:1px solid #808080;border-right:1px solid #fff"></div>
<span class="a" style="left:1625px;top:1161px;font-size:12.9px;white-space:nowrap">Measurements</span>
<div class="a" style="left:1715px;top:1156px;width:205px;height:24px;border-left:1px solid #808080;border-top:1px solid #808080;background:#d4d0c8"></div>

<svg class="a" style="left:1906px;top:1166px" width="14" height="14"><path d="M12.5,2 L12.5,12.5 L2,12.5" stroke="#808080" stroke-width="1" stroke-dasharray="1.5,1.5" fill="none"/></svg>
</body></html>
